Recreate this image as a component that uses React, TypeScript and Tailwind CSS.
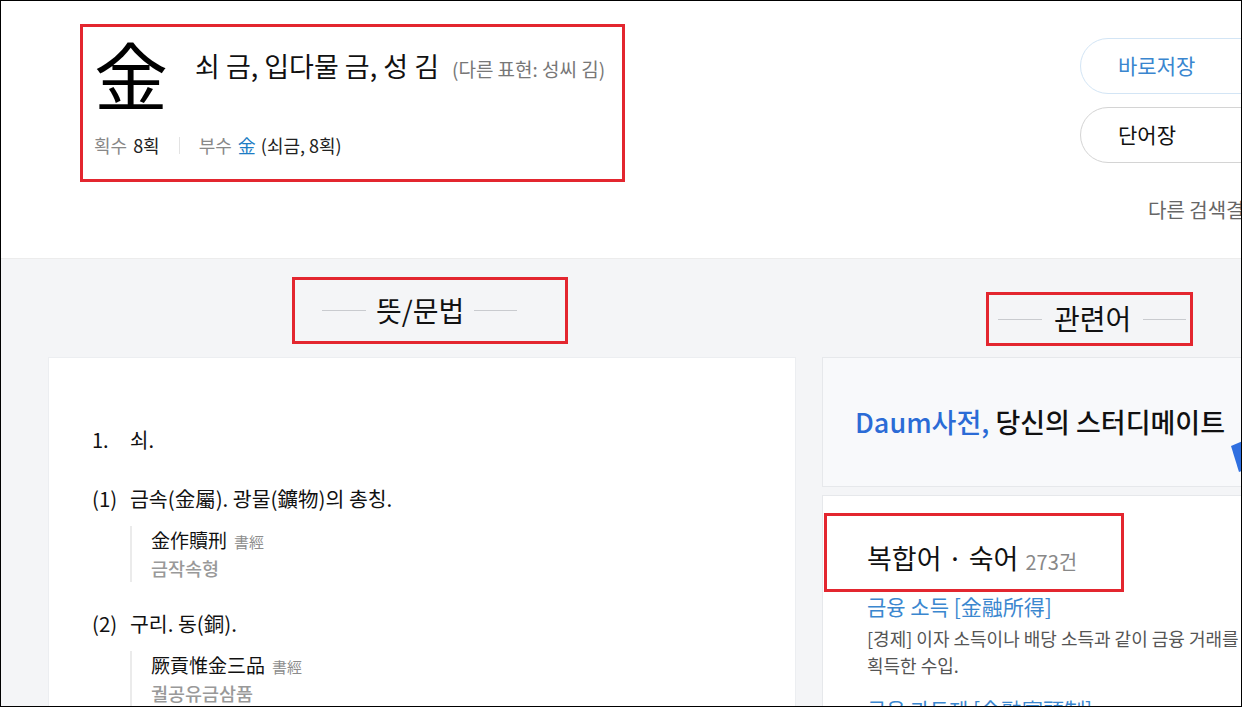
import React from 'react';

const font = "font-['Noto_Sans_CJK_KR','Noto_Sans',sans-serif]";

interface Quote {
  han: string;
  source: string;
  reading: string;
}

interface Sense {
  label: string;
  text: React.ReactNode;
  quote: Quote;
}

const senses: Sense[] = [
  {
    label: '(1)',
    text: '금속(金屬). 광물(鑛物)의 총칭.',
    quote: { han: '金作贖刑', source: '書經', reading: '금작속형' },
  },
  {
    label: '(2)',
    text: '구리. 동(銅).',
    quote: { han: '厥貢惟金三品', source: '書經', reading: '궐공유금삼품' },
  },
];

const SectionTitle: React.FC<{ title: string; className: string }> = ({ title, className }) => (
  <div className={`flex items-center shrink-0 border-[3px] border-[#e3262f] ${className}`}>
    <span className="w-[44px] h-px bg-[#c9cbcf]" />
    <span className="text-[28px] text-[#111] leading-none pb-[2px]">{title}</span>
    <span className="w-[43px] h-px bg-[#c9cbcf]" />
  </div>
);

const App: React.FC = () => {
  return (
    <div className={`w-[1242px] h-[707px] overflow-hidden border border-black bg-white ${font}`}>
      {/* header */}
      <div className="h-[257px] flex shrink-0">
        <div className="ml-[79px] mt-[23px] w-[545px] h-[158px] shrink-0 border-[3px] border-[#e3262f] pl-[11px]">
          <div className="flex items-start">
            <span className="text-[74px] leading-none text-black mt-[9px]">金</span>
            <div className="ml-[27px] mt-[19px] flex items-baseline whitespace-nowrap">
              <span className="text-[27px] text-[#111]">쇠 금, 입다물 금, 성 김</span>
              <span className="ml-[13px] text-[19px] text-[#777]">(다른 표현: 성씨 김)</span>
            </div>
          </div>
          <div className="mt-[22px] flex items-center text-[18px] leading-[26px] whitespace-nowrap">
            <span className="text-[#888]">획수</span>
            <span className="ml-[6px] text-[#222]">8획</span>
            <span className="mx-[19px] w-px h-[17px] bg-[#e3e3e3]" />
            <span className="text-[#888]">부수</span>
            <span className="ml-[6px] text-[#1d7cc4]">金</span>
            <span className="ml-[5px] text-[#222]">(쇠금, 8획)</span>
          </div>
        </div>
        <div className="ml-[455px] mt-[37px] shrink-0 flex flex-col">
          <button className="w-[200px] h-[56px] rounded-full border border-[#d3e5f5] bg-white text-left pl-[37px] text-[21px] text-[#3a86cf]">
            바로저장
          </button>
          <button className="mt-[13px] w-[200px] h-[56px] rounded-full border border-[#d4d4d4] bg-white text-left pl-[37px] text-[21px] text-[#111]">
            단어장
          </button>
          <span className="mt-[32px] ml-[68px] text-[20px] text-[#666] whitespace-nowrap">다른 검색결과</span>
        </div>
      </div>

      {/* body */}
      <div className="h-[450px] bg-[#f4f5f7] border-t border-[#ececec] flex pl-[47px] gap-[26px]">
        {/* meaning column */}
        <div className="w-[748px] shrink-0 flex flex-col">
          <SectionTitle title="뜻/문법" className="ml-[244px] mt-[18px] w-[276px] h-[67px] pl-[27px] gap-[10px]" />
          <div className="mt-[13px] flex-1 bg-white border border-[#eceef1] pl-[43px] pt-[68px]">
            <div className="flex text-[20px] leading-[27px] text-[#111]">
              <span className="w-[38px]">1.</span>
              <span>쇠.</span>
            </div>
            {senses.map((s, i) => (
              <div key={i} className={i === 0 ? 'mt-[32px]' : 'mt-[28px]'}>
                <div className="flex text-[20.5px] leading-[27px] text-[#111]">
                  <span className="w-[38px]">{s.label}</span>
                  <span>{s.text}</span>
                </div>
                <div className="mt-[14px] ml-[38px] border-l-2 border-[#ebebeb] pl-[19px]">
                  <div className="flex items-baseline leading-[27px]">
                    <span className="text-[19px] text-[#111]">{s.quote.han}</span>
                    <span className="ml-[7px] text-[15px] text-[#8c8c8c]">{s.quote.source}</span>
                  </div>
                  <div className="text-[18.5px] leading-[27px] text-[#999] font-medium">{s.quote.reading}</div>
                </div>
              </div>
            ))}
          </div>
        </div>

        {/* related column */}
        <div className="w-[538px] shrink-0 flex flex-col">
          <SectionTitle title="관련어" className="ml-[164px] mt-[33px] w-[207px] h-[54px] pl-[9px] gap-[12px]" />
          <div className="mt-[11px] h-[130px] shrink-0 relative bg-[#f8f9fb] border border-[#e6e8eb] flex items-center pl-[32px]">
            <span className="text-[27px] font-medium text-[#111] whitespace-nowrap">
              <span className="text-[#2b6bd6]">Daum사전,</span> 당신의 스터디메이트
            </span>
            <svg className="absolute left-[406px] top-[80px]" width="40" height="40" viewBox="0 0 40 40">
              <path d="M2 8 L16 2 L22 30 L10 34 Z" fill="#2f6fe0" />
            </svg>
          </div>
          <div className="mt-[8px] flex-1 min-h-0 bg-white border border-[#e6e8eb]">
            <div className="ml-[1px] mt-[17px] w-[300px] h-[79px] border-[3px] border-[#e3262f] pl-[40px] flex items-center pt-[12px]">
              <span className="text-[27px] text-[#111] whitespace-nowrap">복합어 · 숙어</span>
              <span className="ml-[7px] mt-[6px] text-[20px] text-[#888]">273건</span>
            </div>
            <div className="pl-[44px]">
              <div className="text-[21px] leading-[28px] text-[#3b87cf] whitespace-nowrap">금융 소득 [金融所得]</div>
              <div className="mt-[5px] text-[18px] leading-[27px] text-[#555] whitespace-nowrap">
                [경제] 이자 소득이나 배당 소득과 같이 금융 거래를 통하여
                <br />
                획득한 수입.
              </div>
              <div className="mt-[16px] text-[21px] leading-[28px] text-[#3b87cf] whitespace-nowrap">금융 과두제 [金融寡頭制]</div>
            </div>
          </div>
        </div>
      </div>
    </div>
  );
};

export default App;
